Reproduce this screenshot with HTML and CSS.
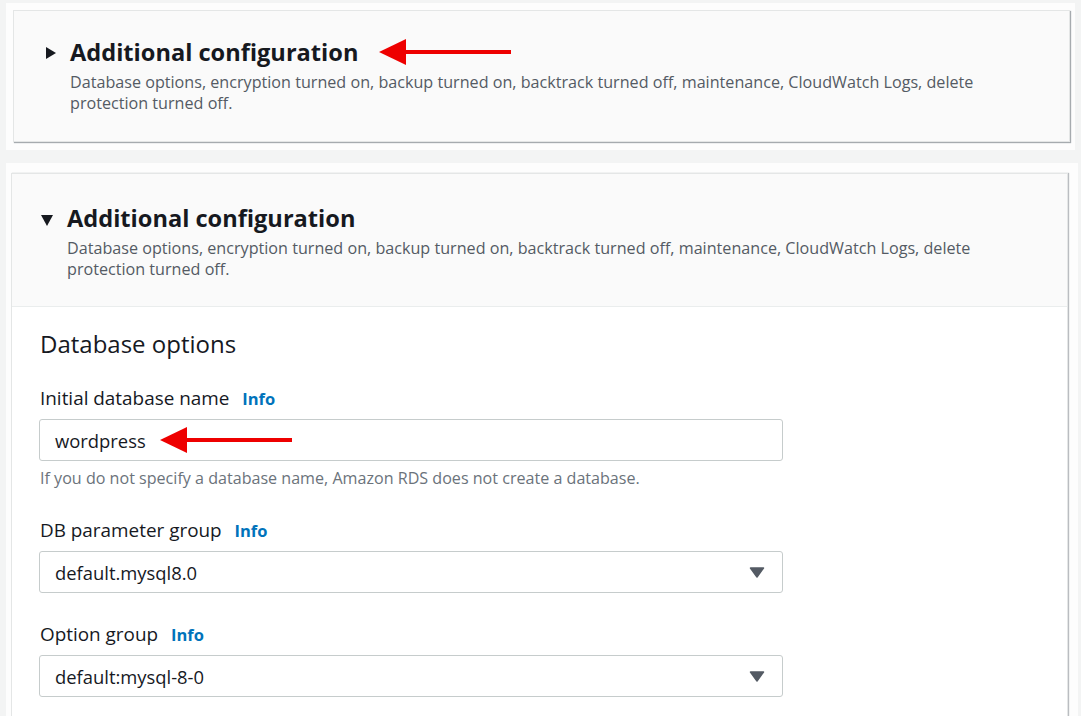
FILE: index.html
```html
<!DOCTYPE html>
<html lang="en">
<head>
<meta charset="utf-8">
<title>Additional configuration</title>
<link rel="stylesheet" href="styles.css">
</head>
<body>
<div class="shot shot-top">
  <section class="card card-collapsed">
    <div class="exp-head">
      <span class="caret caret-right"></span>
      <div class="exp-text">
        <div class="title-row">
          <h2 class="exp-title">Additional configuration</h2>
          <svg class="arrow arrow-title" width="132" height="28" viewBox="0 0 132 28"><polygon points="0,14 27,1 27,27" fill="#ee0000"/><rect x="25" y="12" width="107" height="4" fill="#ee0000"/></svg>
        </div>
        <p class="exp-desc">Database options, encryption turned on, backup turned on, backtrack turned off, maintenance, CloudWatch Logs, delete protection turned off.</p>
      </div>
    </div>
  </section>
</div>
<div class="shot shot-bottom">
  <section class="card card-expanded">
    <div class="exp-head exp-head-open">
      <span class="caret caret-down"></span>
      <div class="exp-text">
        <h2 class="exp-title">Additional configuration</h2>
        <p class="exp-desc">Database options, encryption turned on, backup turned on, backtrack turned off, maintenance, CloudWatch Logs, delete protection turned off.</p>
      </div>
    </div>
    <div class="exp-body">
      <h3 class="section-title">Database options</h3>
      <div class="field">
        <div class="label">Initial database name <span class="info">Info</span></div>
        <div class="input">
          <span class="value">wordpress</span>
          <svg class="arrow arrow-input" width="132" height="28" viewBox="0 0 132 28"><polygon points="0,14 27,1 27,27" fill="#ee0000"/><rect x="25" y="12" width="107" height="4" fill="#ee0000"/></svg>
        </div>
        <div class="help">If you do not specify a database name, Amazon RDS does not create a database.</div>
      </div>
      <div class="field">
        <div class="label">DB parameter group <span class="info">Info</span></div>
        <div class="input select">
          <span class="value">default.mysql8.0</span>
          <svg class="sel-caret" width="16" height="11" viewBox="0 0 16 11"><path d="M1.5 1 H14.5 L8 10 Z" fill="#545b64" stroke="#545b64" stroke-width="1.5" stroke-linejoin="round"/></svg>
        </div>
      </div>
      <div class="field">
        <div class="label">Option group <span class="info">Info</span></div>
        <div class="input select">
          <span class="value">default:mysql-8-0</span>
          <svg class="sel-caret" width="16" height="11" viewBox="0 0 16 11"><path d="M1.5 1 H14.5 L8 10 Z" fill="#545b64" stroke="#545b64" stroke-width="1.5" stroke-linejoin="round"/></svg>
        </div>
      </div>
    </div>
  </section>
</div>
</body>
</html>
```
FILE: styles.css
```css
* { box-sizing: border-box; }
html, body { margin: 0; padding: 0; }
body {
  background: #f3f4f4;
  font-family: "Open Sans", "Liberation Sans", Arial, sans-serif;
  color: #16191f;
  width: 1081px;
  height: 716px;
  overflow: hidden;
}
.shot { background: #fdfdfd; }
.shot-top {
  margin: 3px 6px 0 6px;
  padding: 7px 5px 8px 7px;
}
.shot-bottom {
  margin: 13px 3px 0 6px;
  padding: 10px 10px 0 5px;
  height: 560px;
}
.card {
  background: #fafafa;
  border: 1px solid #e4e6e6;
  box-shadow: 1px 1px 1px rgba(60, 70, 80, 0.45);
}
.card-collapsed { height: 132px; }
.card-expanded { background: #fff; height: 560px; box-shadow: 1px 0 1px rgba(60, 70, 80, 0.35); }
.exp-head {
  display: flex;
  align-items: flex-start;
  padding: 26px 20px 0 32px;
}
.exp-head-open {
  background: #fafafa;
  padding: 29px 20px 26px 29px;
  border-bottom: 1px solid #eaeded;
}
.caret { flex: none; width: 0; height: 0; margin-top: 10px; }
.caret-right {
  border-top: 6px solid transparent;
  border-bottom: 6px solid transparent;
  border-left: 10px solid #16191f;
  margin-right: 14px;
}
.caret-down {
  border-left: 6.5px solid transparent;
  border-right: 6.5px solid transparent;
  border-top: 11px solid #16191f;
  margin-top: 12px;
  margin-right: 14px;
}
.title-row { display: flex; align-items: center; }
.exp-title {
  margin: 0;
  font-size: 23.6px;
  line-height: 30px;
  font-weight: 700;
  color: #16191f;
}
.arrow { display: block; flex: none; }
.arrow-title { margin-left: 21px; margin-top: 0; }
.exp-desc {
  margin: 5px 0 0 0;
  font-size: 16.15px;
  line-height: 21px;
  color: #545b64;
  max-width: 930px;
}
.exp-body { padding: 22px 0 0 27px; }
.section-title {
  margin: 0 0 0 1px;
  font-size: 24px;
  line-height: 30px;
  font-weight: 400;
  color: #16191f;
}
.field { width: 744px; }
.label {
  margin-top: 27px;
  margin-left: 1px;
  font-size: 18.9px;
  line-height: 24px;
  color: #16191f;
}
.field + .field .label { margin-top: 29px; }
.info {
  color: #0073bb;
  font-weight: 700;
  font-size: 16.5px;
  margin-left: 8px;
}
.input {
  margin-top: 8px;
  height: 42px;
  border: 1px solid #c6cccc;
  border-radius: 3px;
  background: #fff;
  display: flex;
  align-items: center;
  padding: 0 17px 0 15px;
}
.select { margin-top: 8px; justify-content: space-between; }
.value { font-size: 18.4px; color: #16191f; }
.arrow-input { margin-left: 14px; }
.sel-caret { display: block; }
.help {
  margin-top: 6px;
  margin-left: 1px;
  font-size: 16.1px;
  line-height: 22px;
  color: #6b737b;
}
```
